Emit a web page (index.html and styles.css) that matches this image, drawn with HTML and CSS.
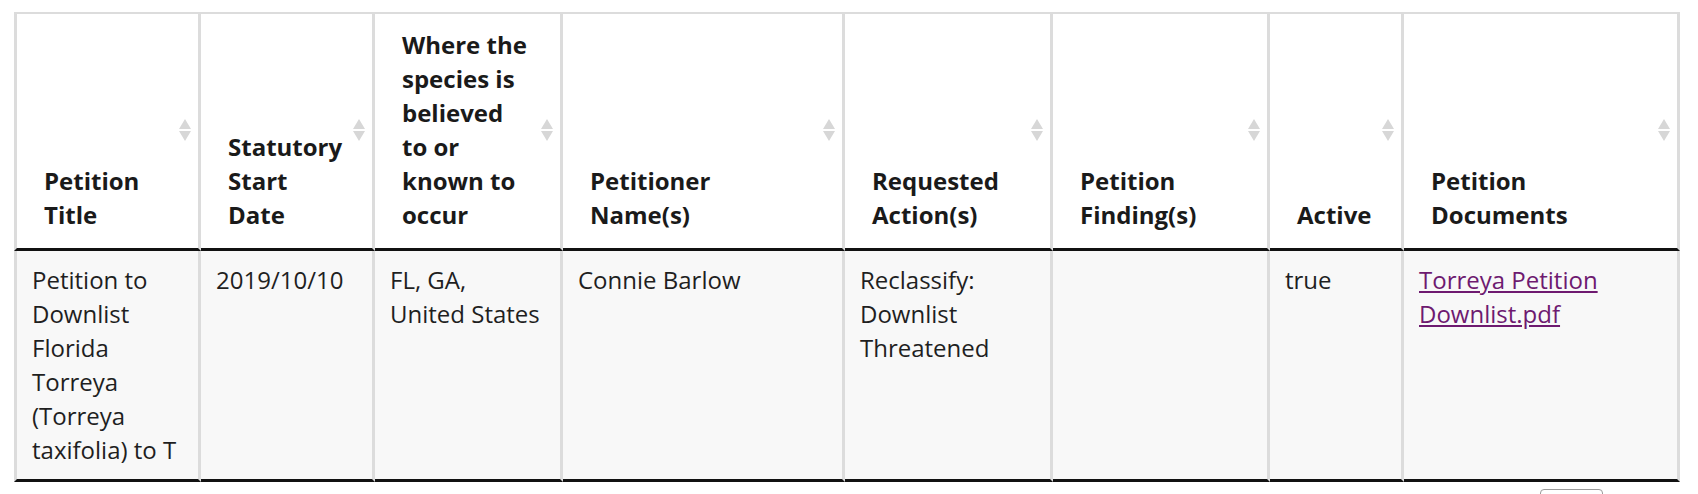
FILE: index.html
```html
<!DOCTYPE html>
<html lang="en">
<head>
<meta charset="utf-8">
<title>Petitions</title>
<link rel="stylesheet" href="styles.css">
</head>
<body>
<div class="page">
  <table class="grid">
    <colgroup>
      <col class="c1"><col class="c2"><col class="c3"><col class="c4"><col class="c5"><col class="c6"><col class="c7"><col class="c8">
    </colgroup>
    <thead>
      <tr>
        <th>Petition<br>Title<span class="sort"></span></th>
        <th>Statutory<br>Start<br>Date<span class="sort"></span></th>
        <th>Where the<br>species is<br>believed<br>to or<br>known to<br>occur<span class="sort"></span></th>
        <th>Petitioner<br>Name(s)<span class="sort"></span></th>
        <th>Requested<br>Action(s)<span class="sort"></span></th>
        <th>Petition<br>Finding(s)<span class="sort"></span></th>
        <th>Active<span class="sort"></span></th>
        <th>Petition<br>Documents<span class="sort"></span></th>
      </tr>
    </thead>
    <tbody>
      <tr>
        <td>Petition to Downlist Florida Torreya (Torreya taxifolia) to T</td>
        <td>2019/10/10</td>
        <td>FL, GA,<br>United States</td>
        <td>Connie Barlow</td>
        <td>Reclassify: Downlist Threatened</td>
        <td></td>
        <td>true</td>
        <td><a class="doc" href="#">Torreya Petition Downlist.pdf</a></td>
      </tr>
    </tbody>
  </table>
  <div class="pager"><span class="pager-btn"></span></div>
</div>
</body>
</html>
```

FILE: styles.css
```css
html, body {
  margin: 0;
  padding: 0;
  background: #ffffff;
}

.page {
  box-sizing: border-box;
  height: 494px;
  overflow: hidden;
  padding: 12px 0 0 14px;
  font-family: "Open Sans", "Liberation Sans", sans-serif;
  color: #1f1f1f;
}

.grid {
  table-layout: fixed;
  width: 1666px;
  border-collapse: separate;
  border-spacing: 0;
  font-size: 24px;
  line-height: 34px;
}

.c1 { width: 187px; }
.c2 { width: 174px; }
.c3 { width: 188px; }
.c4 { width: 282px; }
.c5 { width: 208px; }
.c6 { width: 217px; }
.c7 { width: 134px; }
.c8 { width: 276px; }

.grid th,
.grid td {
  border-right: 3px solid #dcdcdc;
  text-align: left;
}

.grid th:first-child,
.grid td:first-child {
  border-left: 3px solid #dcdcdc;
}

.grid th {
  position: relative;
  vertical-align: bottom;
  font-weight: 700;
  color: #1a1a1a;
  background: #ffffff;
  border-top: 2px solid #dcdcdc;
  border-bottom: 3px solid #111111;
  padding: 14px 12px 16px 27px;
  white-space: nowrap;
}

.grid td {
  vertical-align: top;
  font-weight: 400;
  background: #f8f8f8;
  border-bottom: 3px solid #111111;
  padding: 12px 15px 12px 15px;
}

.sort {
  position: absolute;
  right: 7px;
  top: 50%;
  width: 12px;
  height: 22px;
  margin-top: -12px;
  display: flex;
  flex-direction: column;
  justify-content: space-between;
}

.sort::before,
.sort::after {
  content: "";
  display: block;
  width: 0;
  height: 0;
  border-left: 6px solid transparent;
  border-right: 6px solid transparent;
}

.sort::before {
  border-bottom: 10px solid #d7d7d7;
}

.sort::after {
  border-top: 10px solid #d7d7d7;
}

.doc {
  color: #6e1a70;
  text-decoration: underline;
}

.pager {
  display: flex;
  justify-content: flex-end;
  width: 1666px;
  padding-top: 7px;
}

.pager-btn {
  display: block;
  width: 63px;
  height: 30px;
  margin-right: 77px;
  border: 1px solid #9a9a9a;
  border-radius: 4px;
  box-sizing: border-box;
}
```
